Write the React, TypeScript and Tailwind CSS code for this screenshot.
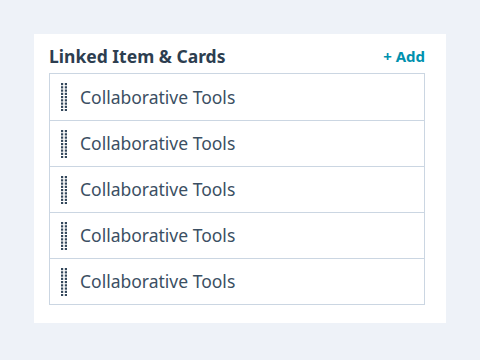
const items = Array.from({ length: 5 }, () => 'Collaborative Tools')

function DragHandle() {
  const dots = []
  for (let r = 0; r < 9; r++) {
    for (let c = 0; c < 2; c++) {
      dots.push(<rect key={`${r}-${c}`} x={c * 3.8} y={r * 3.25} width="2.2" height="2.2" />)
    }
  }
  return (
    <svg width="6" height="28" viewBox="0 0 6 28" className="fill-[#33475b] shrink-0">
      {dots}
    </svg>
  )
}

export default function App() {
  return (
    <div className="w-[480px] h-[360px] bg-[#eef2f8] pt-[34px] pl-[34px]" style={{ fontFamily: '"Noto Sans", "Open Sans", sans-serif' }}>
      <div className="w-[412px] h-[289px] bg-white pl-[15px] pr-[21px] pt-[11px]">
        <div className="flex items-center justify-between h-[22px]">
          <h3 className="text-[17.5px] font-bold text-[#2d3e50]">Linked Item &amp; Cards</h3>
          <button className="text-[15px] font-bold text-[#0091ae]">+ Add</button>
        </div>
        <ul className="mt-[6px] border border-[#cbd6e2]">
          {items.map((label, i) => (
            <li key={i} className={`flex items-center h-[46px] pl-[11px] gap-[13px] ${i > 0 ? 'border-t border-[#cbd6e2]' : ''}`}>
              <DragHandle />
              <span className="text-[17.5px] text-[#3b4f63]">{label}</span>
            </li>
          ))}
        </ul>
      </div>
    </div>
  )
}
